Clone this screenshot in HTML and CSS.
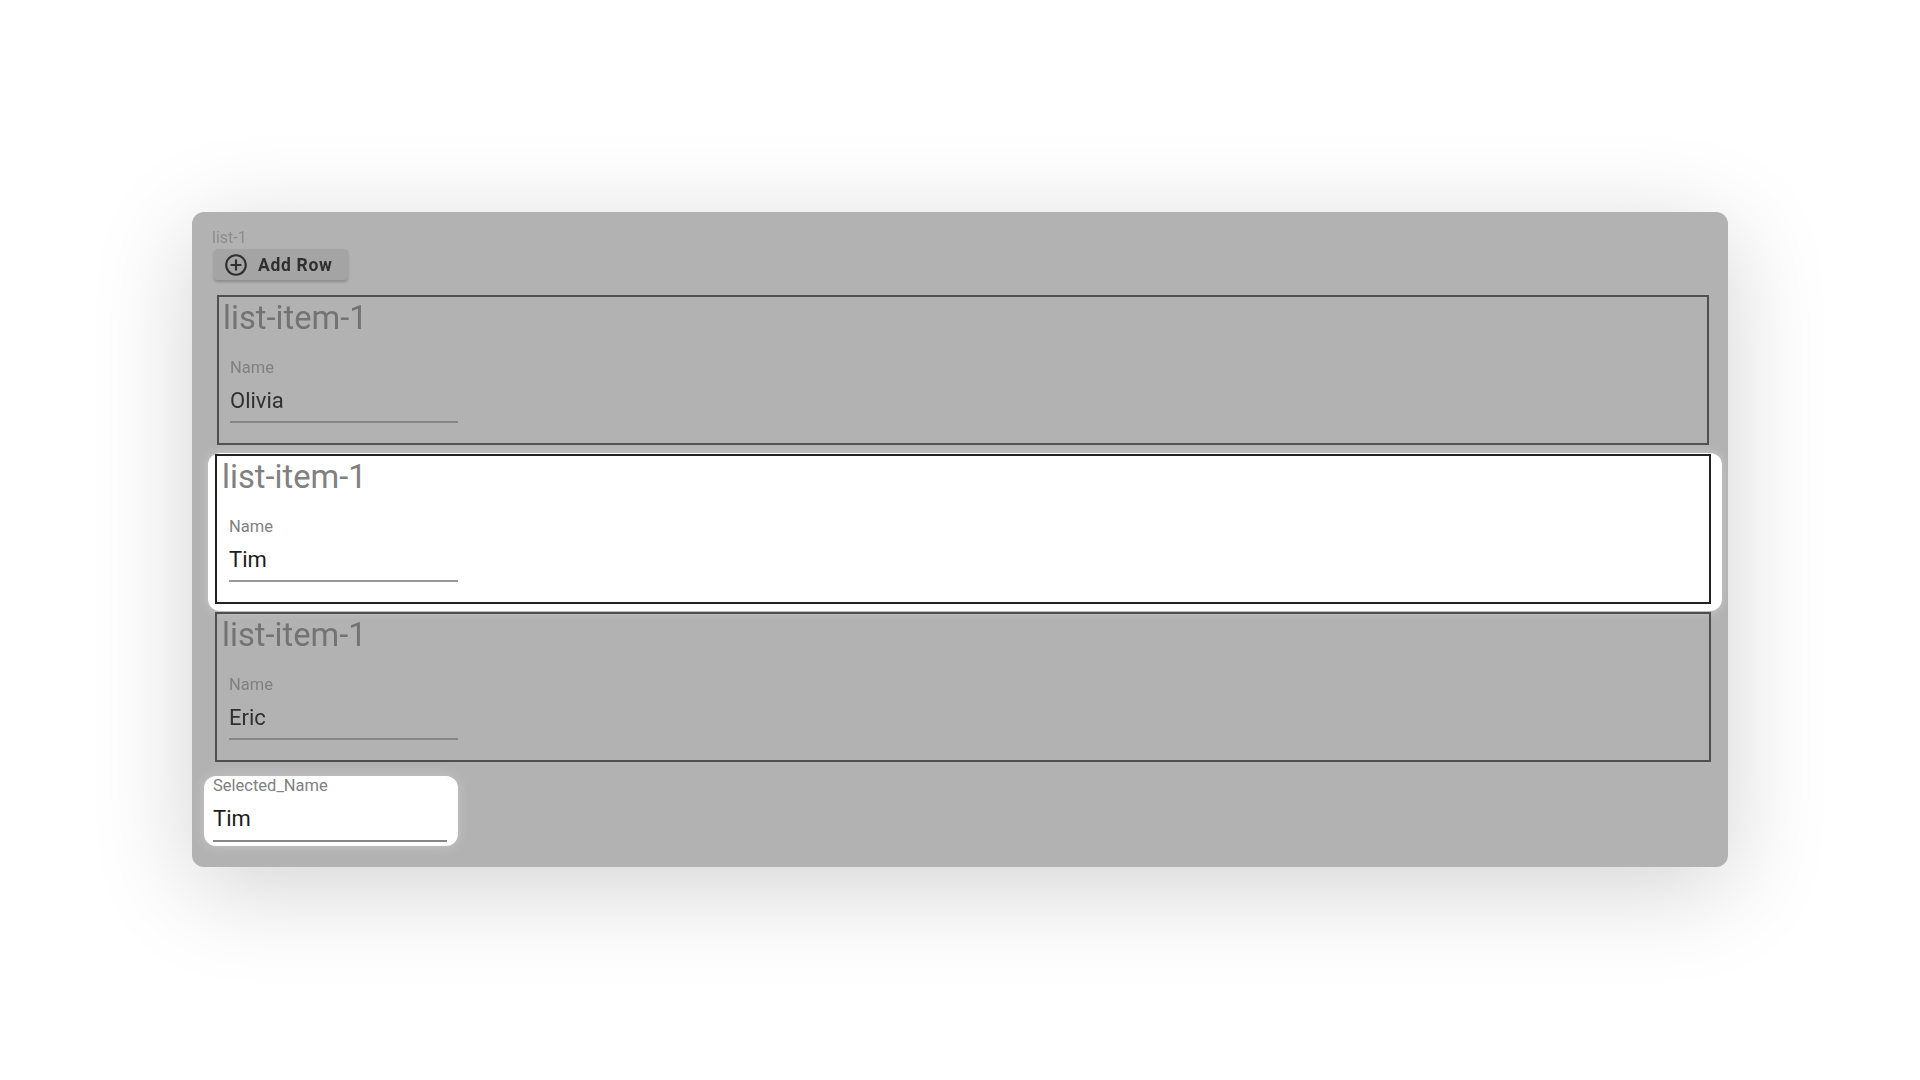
FILE: index.html
```html
<!DOCTYPE html>
<html lang="en">
<head>
    <meta charset="UTF-8">
    <title>List selection</title>
    <link rel="stylesheet" href="styles.css">
</head>
<body>
    <div class="panel">
        <div class="list-label">list-1</div>
        <button class="add-row">
            <svg class="add-icon" viewBox="0 0 24 24"><path d="M13 7h-2v4H7v2h4v4h2v-4h4v-2h-4V7zm-1-5C6.48 2 2 6.48 2 12s4.48 10 10 10 10-4.48 10-10S17.52 2 12 2zm0 18c-4.41 0-8-3.59-8-8s3.59-8 8-8 8 3.59 8 8-3.59 8-8 8z"/></svg>
            <span>Add Row</span>
        </button>

        <div class="list-item first">
            <div class="item-title">list-item-1</div>
            <div class="field">
                <div class="field-label">Name</div>
                <div class="field-value">Olivia</div>
            </div>
        </div>

        <div class="selected-wrap">
            <div class="list-item selected">
                <div class="item-title">list-item-1</div>
                <div class="field">
                    <div class="field-label">Name</div>
                    <div class="field-value">Tim</div>
                </div>
            </div>
        </div>

        <div class="list-item last">
            <div class="item-title">list-item-1</div>
            <div class="field">
                <div class="field-label">Name</div>
                <div class="field-value">Eric</div>
            </div>
        </div>

        <div class="selected-name">
            <div class="field-label">Selected_Name</div>
            <div class="field-value">Tim</div>
        </div>
    </div>
</body>
</html>
```

FILE: styles.css
```css
* {
    box-sizing: border-box;
}

body {
    background: #fff;
    margin: 0;
    height: 1080px;
    padding: 212px 192px 0;
    overflow: hidden;
    font-family: Roboto, "Liberation Sans", sans-serif;
}

.panel {
    width: 1536px;
    height: 655px;
    padding: 17px 0 0 12px;
    background: #b2b2b2;
    border-radius: 12px;
    box-shadow: 0 20px 100px rgba(0, 0, 0, 0.18);
}

.list-label {
    height: 18px;
    margin-left: 8px;
    font-size: 16px;
    line-height: 18px;
    color: #8c8c8c;
    filter: blur(0.5px);
}

.add-row {
    display: flex;
    align-items: center;
    gap: 9px;
    width: 134px;
    height: 31px;
    margin: 2px 0 15px 10px;
    padding: 0 0 0 11px;
    border: none;
    border-radius: 4px;
    background: #a4a4a4;
    box-shadow: 0 2px 3px rgba(0, 0, 0, 0.22);
    font-family: inherit;
    font-size: 17.5px;
    font-weight: 700;
    letter-spacing: 0.7px;
    color: #2f2f2f;
    filter: blur(0.4px);
}

.add-icon {
    width: 26px;
    height: 26px;
    margin-left: -2px;
    fill: #2f2f2f;
}

.list-item {
    height: 150px;
    border: 2px solid #4f4f4f;
    padding-left: 5px;
}

.list-item.first {
    width: 1492px;
    margin: 0 0 8px 13px;
    padding-left: 4px;
}

.list-item.last {
    width: 1496px;
    margin: 1px 0 14px 11px;
}

.selected-wrap {
    width: 1514px;
    height: 158px;
    margin-left: 4px;
    padding: 1px 0 0 7px;
    background: #fff;
    border-radius: 12px;
    box-shadow: 0 0 12px rgba(255, 255, 255, 0.3);
}

.list-item.selected {
    width: 1496px;
    border-color: #222;
}

.item-title {
    height: 41px;
    font-size: 32.7px;
    line-height: 42px;
    color: #808080;
}

.list-item.first .item-title,
.list-item.last .item-title {
    color: #737373;
    filter: blur(0.4px);
}

.field {
    width: 229px;
    margin: 21px 0 0 7px;
    padding-bottom: 7px;
    border-bottom: 2px solid #999;
}

.first .field {
    width: 228px;
}

.field-label {
    font-size: 16.5px;
    line-height: 18px;
    color: #808080;
}

.field-value {
    margin-top: 11px;
    font-size: 22px;
    line-height: 26px;
    color: #1c1c1c;
}

.first .field,
.last .field {
    border-bottom-color: #868686;
}

.first .field-label,
.last .field-label {
    color: #808080;
    filter: blur(0.4px);
}

.first .field-value,
.last .field-value {
    color: #303030;
    filter: blur(0.3px);
}

.selected-name {
    width: 254px;
    height: 70px;
    padding: 1px 11px 0 9px;
    background: #fff;
    border-radius: 12px;
    box-shadow: 0 0 14px rgba(255, 255, 255, 0.25);
}

.selected-name .field-value {
    margin-top: 11px;
    padding-bottom: 8px;
    border-bottom: 2px solid #888;
}
```
